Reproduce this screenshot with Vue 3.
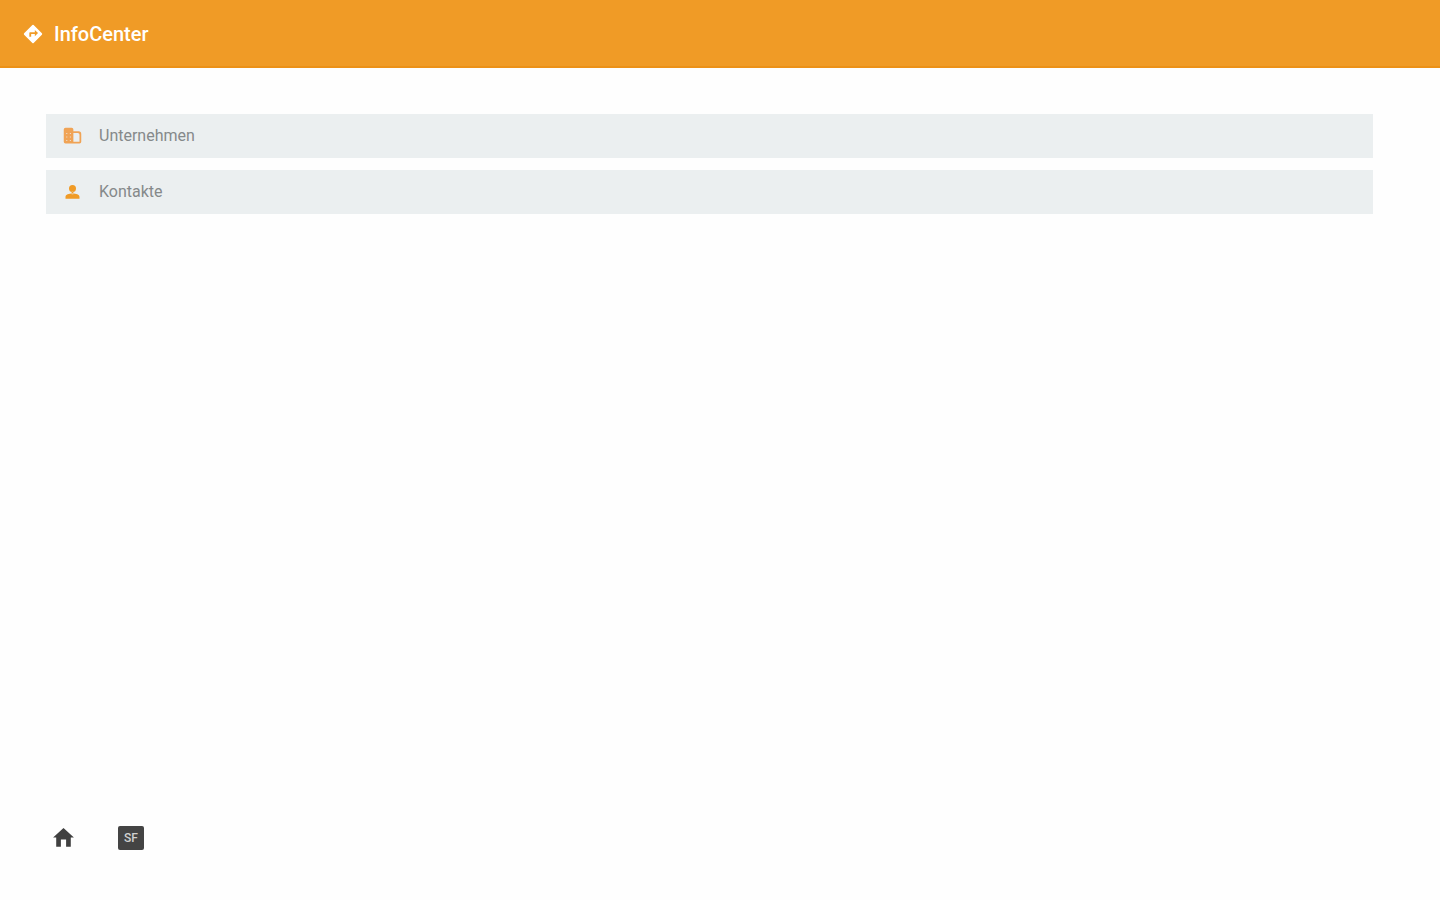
<script setup>
const entries = [
  {
    label: 'Unternehmen',
    icon: 'company',
    path: 'M13 6V4a2 2 0 0 0-2-2H4a2 2 0 0 0-2 2v14a2 2 0 0 0 2 2h16a2 2 0 0 0 2-2V9a3 3 0 0 0-3-3zM6 17H5v-1h1zm0-4H5v-1h1zm0-4H5V8h1zm4 8H9v-1h1zm0-4H9v-1h1zm0-4H9V8h1zm10 9h-7V8h5a2 2 0 0 1 2 2z',
  },
  {
    label: 'Kontakte',
    icon: 'contact',
    path: 'M12 11.500a4 4 0 1 0 0-8 4 4 0 0 0 0 8zM11 11h2v3h-2zM12 13c-4 0-8 1-8 4v2h16v-2c0-3-4-4-8-4z',
  },
]
</script>

<template>
  <div class="page">
    <header class="bar">
      <svg class="bar-icon" viewBox="0 0 24 24" aria-hidden="true">
        <path d="M21.71 11.29l-9-9a.996.996 0 0 0-1.41 0l-9 9a.996.996 0 0 0 0 1.41l9 9c.39.39 1.02.39 1.41 0l9-9a.996.996 0 0 0 0-1.41zM14 14.5V12h-4v3H8v-4c0-.55.45-1 1-1h5V7.5l3.5 3.5-3.5 3.5z" />
      </svg>
      <h1>InfoCenter</h1>
    </header>
    <main>
      <nav class="entries">
        <a v-for="entry in entries" :key="entry.label" class="entry" href="#">
          <svg :class="['entry-icon', entry.icon]" viewBox="0 0 24 24" aria-hidden="true">
            <path :d="entry.path" />
          </svg>
          <span>{{ entry.label }}</span>
        </a>
      </nav>
    </main>
    <footer class="tools">
      <button type="button" aria-label="Home">
        <svg class="home" viewBox="0 0 24 24" aria-hidden="true">
          <path d="M9.500 20v-7h5v7H19v-9h3L12 2 2 11h3v9z" />
        </svg>
      </button>
      <button type="button" class="badge">SF</button>
    </footer>
  </div>
</template>

<style>
body {
  margin: 0;
  background: #fefefe;
}
</style>

<style scoped>
.page {
  display: flex;
  flex-direction: column;
  min-height: 100vh;
  box-sizing: border-box;
  font-family: Roboto, "Liberation Sans", sans-serif;
}
.bar {
  display: flex;
  align-items: center;
  gap: 10px;
  height: 68px;
  padding: 0 22px;
  box-sizing: border-box;
  background: #f09b26;
  box-shadow: inset 0 -2px #ec9117;
  color: #fff;
}
.bar-icon {
  width: 22px;
  height: 22px;
  fill: #fff;
}
h1 {
  margin: 0;
  font-size: 20px;
  line-height: 24px;
  font-weight: 500;
}
main {
  flex: 1;
  padding: 46px 67px 0 46px;
}
.entries {
  display: flex;
  flex-direction: column;
  gap: 12px;
}
.entry {
  display: flex;
  align-items: center;
  gap: 16px;
  height: 44px;
  padding: 0 16px;
  background: #ebeff0;
  color: #85898a;
  font-size: 16px;
  line-height: 20px;
  text-decoration: none;
}
.entry-icon {
  width: 21px;
  height: 21px;
  fill: #f09b26;
}
.company {
  fill: #f0a355;
}
.tools {
  display: flex;
  align-items: center;
  gap: 42px;
  padding: 0 51px 50px;
}
.tools button {
  display: flex;
  align-items: center;
  justify-content: center;
  height: 24px;
  padding: 0;
  border: 0;
  background: none;
  font-family: inherit;
}
.home {
  width: 25px;
  height: 25px;
  fill: #404040;
}
.tools .badge {
  width: 26px;
  border-radius: 2px;
  background: #444;
  color: #d0d0d0;
  font-size: 12px;
  font-weight: 500;
  line-height: 16px;
}
</style>
